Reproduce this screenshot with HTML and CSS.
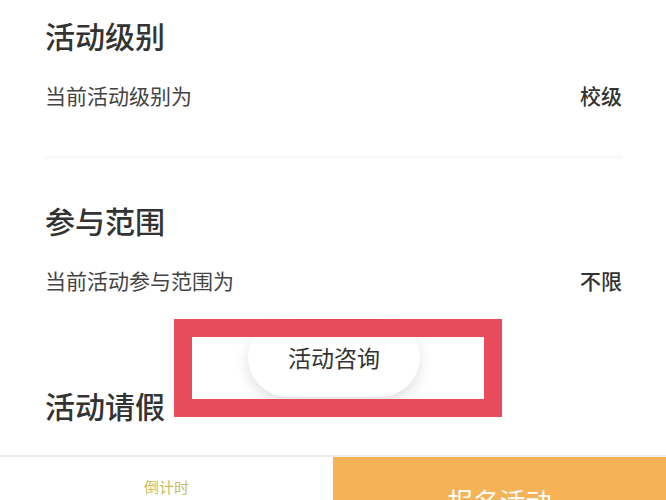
FILE: index.html
```html
<!DOCTYPE html>
<html lang="zh-CN">
<head>
    <meta charset="UTF-8">
    <meta name="viewport" content="width=device-width, initial-scale=1.0">
    <title>活动详情</title>
    <link rel="stylesheet" href="styles.css">
</head>
<body>
    <div class="page">
        <main class="detail">
            <!-- 活动级别 -->
            <section class="block">
                <h2 class="block-title">活动级别</h2>
                <div class="block-row">
                    <span class="row-label">当前活动级别为</span>
                    <span class="row-value">校级</span>
                </div>
                <div class="block-divider"></div>
            </section>

            <!-- 参与范围 -->
            <section class="block">
                <h2 class="block-title">参与范围</h2>
                <div class="block-row">
                    <span class="row-label">当前活动参与范围为</span>
                    <span class="row-value">不限</span>
                </div>
            </section>

            <!-- 活动请假 -->
            <section class="block">
                <h2 class="block-title">活动请假</h2>
            </section>
        </main>

        <button class="consult-btn">活动咨询</button>
        <div class="mark-box"></div>

        <footer class="action-bar">
            <div class="countdown">
                <span class="countdown-label">倒计时</span>
            </div>
            <button class="signup-btn">报名活动</button>
        </footer>
    </div>
</body>
</html>
```

FILE: styles.css
```css
* {
    margin: 0;
    padding: 0;
    box-sizing: border-box;
}

body {
    font-family: "Noto Sans CJK SC", "Noto Sans", sans-serif;
    -webkit-font-smoothing: antialiased;
    background-color: #ffffff;
    width: 666px;
    height: 500px;
    overflow: hidden;
}

.page {
    position: relative;
    display: flex;
    flex-direction: column;
    height: 545px;
}

.detail {
    height: 455px;
    flex: none;
    padding: 0 44px 0 45px;
    overflow: hidden;
}

.block {
    height: 185px;
    padding-top: 14px;
}

.block-title {
    font-size: 30px;
    line-height: 42px;
    font-weight: 500;
    color: #333;
}

.block-row {
    display: flex;
    justify-content: space-between;
    align-items: center;
    margin-top: 24px;
    line-height: 30px;
}

.row-label {
    font-size: 21px;
    color: #444;
}

.row-value {
    font-size: 21px;
    font-weight: 500;
    color: #333;
}

.block-divider {
    margin-top: 46px;
    height: 3px;
    background-color: #f9f9f9;
}

.consult-btn {
    position: absolute;
    left: 248px;
    top: 317px;
    width: 172px;
    height: 80px;
    border: none;
    border-radius: 40px;
    background-color: #fff;
    box-shadow: 0 6px 14px rgba(0, 0, 0, 0.12);
    font-family: inherit;
    font-size: 23px;
    color: #333;
}

.mark-box {
    position: absolute;
    left: 174px;
    top: 319px;
    width: 328px;
    height: 98px;
    border: 18px solid #e84b5b;
}

.action-bar {
    flex: none;
    display: flex;
    height: 90px;
    border-top: 2px solid #eeeeee;
}

.countdown {
    width: 333px;
    display: flex;
    flex-direction: column;
    align-items: center;
    padding-top: 19px;
    background-color: #fff;
}

.countdown-label {
    font-size: 15px;
    line-height: 22px;
    color: #c9bd63;
}

.signup-btn {
    flex: 1;
    border: none;
    background-color: #f5b257;
    font-family: inherit;
    font-size: 26px;
    color: #fff;
    padding-bottom: 2px;
}
```
